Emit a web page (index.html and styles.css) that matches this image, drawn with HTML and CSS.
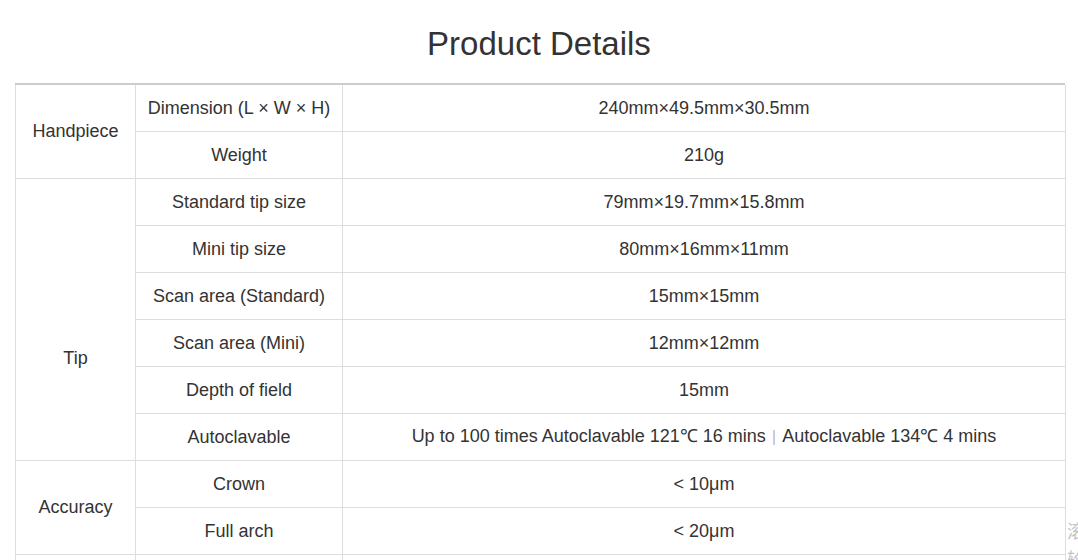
FILE: index.html
```html
<!DOCTYPE html>
<html lang="en">
<head>
<meta charset="utf-8">
<title>Product Details</title>
<link rel="stylesheet" href="styles.css">
</head>
<body>
<h1 class="title">Product Details</h1>
<div class="specs">
  <table class="spec-table">
    <colgroup>
      <col class="col-group">
      <col class="col-name">
      <col class="col-value">
    </colgroup>
    <tbody>
      <tr class="first">
        <td rowspan="2">Handpiece</td>
        <td>Dimension (L × W × H)</td>
        <td>240mm×49.5mm×30.5mm</td>
      </tr>
      <tr>
        <td>Weight</td>
        <td>210g</td>
      </tr>
      <tr>
        <td rowspan="6" class="group-low">Tip</td>
        <td>Standard tip size</td>
        <td>79mm×19.7mm×15.8mm</td>
      </tr>
      <tr>
        <td>Mini tip size</td>
        <td>80mm×16mm×11mm</td>
      </tr>
      <tr>
        <td>Scan area (Standard)</td>
        <td>15mm×15mm</td>
      </tr>
      <tr>
        <td>Scan area (Mini)</td>
        <td>12mm×12mm</td>
      </tr>
      <tr>
        <td>Depth of field</td>
        <td>15mm</td>
      </tr>
      <tr>
        <td>Autoclavable</td>
        <td>Up to 100 times Autoclavable 121℃ 16 mins<span class="sep">|</span>Autoclavable 134℃ 4 mins</td>
      </tr>
      <tr>
        <td rowspan="2">Accuracy</td>
        <td>Crown</td>
        <td>&lt; 10μm</td>
      </tr>
      <tr>
        <td>Full arch</td>
        <td>&lt; 20μm</td>
      </tr>
      <tr>
        <td>&nbsp;</td>
        <td>&nbsp;</td>
        <td>&nbsp;</td>
      </tr>
    </tbody>
  </table>
</div>
<div class="side-tab"><span class="side-char">滚</span><span class="side-char">轮</span></div>
</body>
</html>
```

FILE: styles.css
```css
html, body {
  margin: 0;
  padding: 0;
  background: #ffffff;
  overflow: hidden;
}

body {
  font-family: "Liberation Sans", Arial, sans-serif;
  color: #333333;
  width: 1078px;
  height: 560px;
  position: relative;
}

.title {
  margin: 0;
  padding: 24px 0 19px;
  font-size: 33px;
  line-height: 40px;
  font-weight: normal;
  text-align: center;
  color: #333333;
}

.specs {
  margin-left: 15px;
  width: 1050px;
  border-top: 2px solid #cccccc;
  box-sizing: border-box;
}

.spec-table {
  width: 1050px;
  border-collapse: collapse;
  table-layout: fixed;
  font-size: 18px;
}

.col-group { width: 120px; }
.col-name { width: 207px; }
.col-value { width: 723px; }

.spec-table td {
  border: 1px solid #dddddd;
  height: 47px;
  padding: 0;
  text-align: center;
  vertical-align: middle;
  line-height: 20px;
  box-sizing: border-box;
}

.spec-table tr.first td {
  border-top: none;
  height: 46px;
}

.spec-table td.group-low {
  padding-top: 78px;
}

.sep {
  color: #bbbbbb;
  padding: 0 6px;
  font-size: 17px;
}

.side-tab {
  position: absolute;
  left: 1067px;
  top: 520px;
  display: flex;
  flex-direction: column;
  gap: 8px;
  font-family: "Noto Sans CJK SC", sans-serif;
  font-size: 18px;
  line-height: 20px;
  color: #c4c4c4;
}

.side-char {
  display: block;
  width: 18px;
}
```
